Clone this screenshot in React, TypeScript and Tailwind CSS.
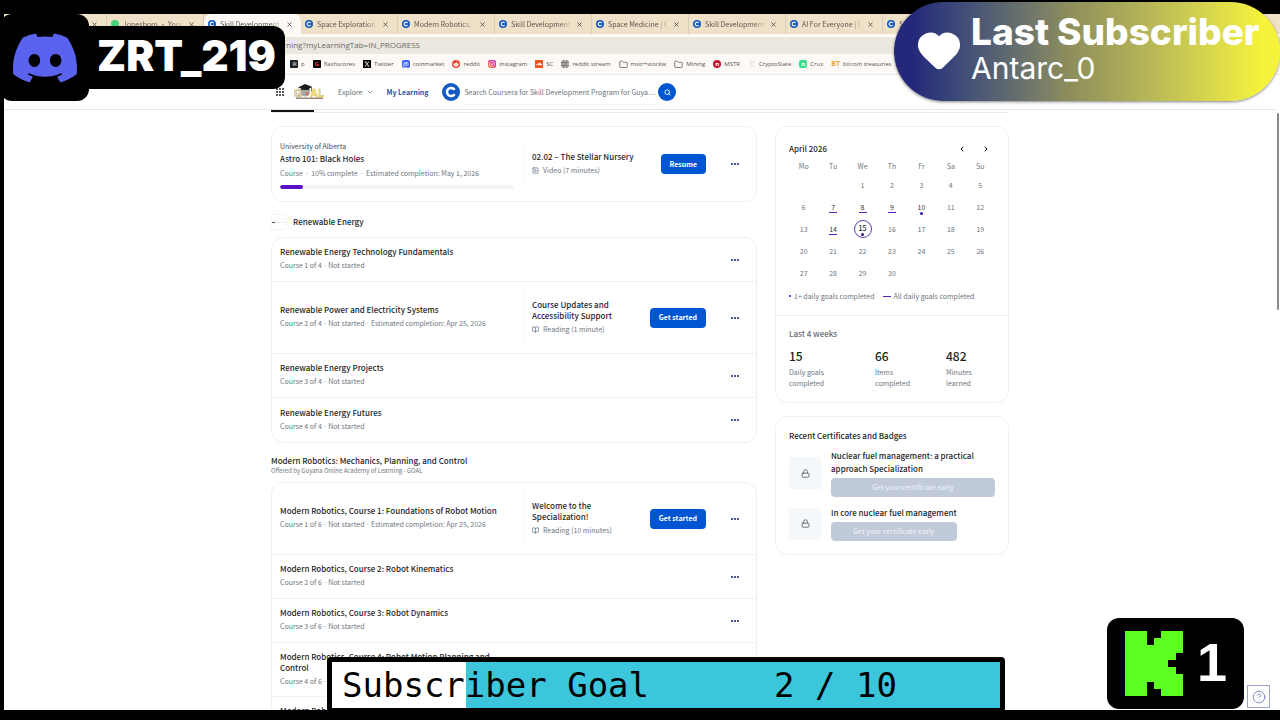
import type { ReactNode } from 'react';
import { BookOpen, ChevronDown, ChevronLeft, ChevronRight, CircleHelp, Folder, Globe, Heart, Lock, Search, SquarePlay, X } from 'lucide-react';
import { FaInstagram, FaRedditAlien, FaSoundcloud } from 'react-icons/fa';
import { FaXTwitter } from 'react-icons/fa6';
import { SiDiscord } from 'react-icons/si';

type NextItem = { title: string; kind: 'video' | 'reading'; meta: string; action: string };
type Course = { title: string; meta: string[]; next?: NextItem; tall?: boolean };

const tabs = [
  { title: '' },
  { title: 'Jonesboro • Young Th', green: true },
  { title: 'Skill Development Prog', active: true },
  { title: 'Space Exploration - Ho' },
  { title: 'Modern Robotics, Cour' },
  { title: 'Skill Development Prog' },
  { title: 'Space Medicine | Cours' },
  { title: 'Skill Development Prog' },
  { title: 'AI For Everyone | Cours' },
  { title: 'S' },
];

const renewable: Course[] = [
  { title: 'Renewable Energy Technology Fundamentals', meta: ['Course 1 of 4', 'Not started'] },
  {
    title: 'Renewable Power and Electricity Systems',
    meta: ['Course 2 of 4', 'Not started', 'Estimated completion: Apr 25, 2026'],
    next: { title: 'Course Updates and Accessibility Support', kind: 'reading', meta: 'Reading (1 minute)', action: 'Get started' },
  },
  { title: 'Renewable Energy Projects', meta: ['Course 3 of 4', 'Not started'] },
  { title: 'Renewable Energy Futures', meta: ['Course 4 of 4', 'Not started'] },
];

const robotics: Course[] = [
  {
    title: 'Modern Robotics, Course 1: Foundations of Robot Motion',
    meta: ['Course 1 of 6', 'Not started', 'Estimated completion: Apr 25, 2026'],
    next: { title: 'Welcome to the Specialization!', kind: 'reading', meta: 'Reading (10 minutes)', action: 'Get started' },
  },
  { title: 'Modern Robotics, Course 2: Robot Kinematics', meta: ['Course 2 of 6', 'Not started'] },
  { title: 'Modern Robotics, Course 3: Robot Dynamics', meta: ['Course 3 of 6', 'Not started'] },
  { title: 'Modern Robotics, Course 4: Robot Motion Planning and Control', meta: ['Course 4 of 6', 'Not started'], tall: true },
  { title: 'Modern Robotics, Course 5: Robot Manipulation and Wheeled Mobile Robots', meta: ['Course 5 of 6', 'Not started'], tall: true },
];

// April 2026 starts on a Wednesday; 0 is a blank cell.
const weeks = [
  [0, 0, 1, 2, 3, 4, 5],
  [6, 7, 8, 9, 10, 11, 12],
  [13, 14, 15, 16, 17, 18, 19],
  [20, 21, 22, 23, 24, 25, 26],
  [27, 28, 29, 30, 0, 0, 0],
];
const allGoals = [7, 8, 9, 14];
const someGoals = [10, 15];
const today = 15;

function CourseraMark({ className }: { className: string }) {
  return (
    <svg viewBox="0 0 18 18" className={className} aria-hidden="true">
      <circle cx="9" cy="9" r="9" fill="#1459c4" />
      <path d="M12.6 6.9A4.1 4.1 0 1 0 12.6 11.1" fill="none" stroke="#fff" strokeWidth="2.5" />
    </svg>
  );
}

function GoalLogo() {
  return (
    <svg viewBox="0 0 30 16" className="h-4 w-[30px]" role="img" aria-label="GOAL">
      <g fontFamily="Liberation Sans" fontSize="11" fontWeight="bold">
        <text x="0" y="12.5" fill="#fff" stroke="#b9a35c" strokeWidth="0.7">G</text>
        <text x="16" y="12.5" fill="#f3e36a" stroke="#c9b648" strokeWidth="0.3">AL</text>
      </g>
      <circle cx="11.500" cy="8" r="4.500" fill="#a9a9a9" />
      <circle cx="13" cy="9.500" r="1.500" fill="#d96a5c" />
      <path d="M4 3.500 11 0l7.500 3-7 3.200z" fill="#1d1d1d" />
      <path d="M7.500 4.500v1.500q4-2 7.500 0v-1.500M17.500 3.500v4" fill="#1d1d1d" stroke="#1d1d1d" strokeWidth="0.6" />
      <path d="M2 14.200h27" stroke="#6a4b3d" strokeWidth="1" />
    </svg>
  );
}

function TabStrip() {
  return (
    <div className="flex h-5 shrink-0 overflow-hidden bg-[#eee1c8] pl-[6px] text-[7px] leading-4">
      {tabs.map((tab, i) => (
        <div
          key={i}
          className={
            tab.active
              ? 'flex w-[97px] shrink-0 items-center gap-1 rounded-t-lg bg-[#fdfaf5] px-1'
              : 'flex w-[97px] shrink-0 items-center gap-1 border-r border-[#d9cdb6] px-1'
          }
        >
          {tab.green ? (
            <span className="size-2 shrink-0 rounded-full bg-[#43d47a]" />
          ) : (
            <CourseraMark className="size-2 shrink-0" />
          )}
          <span className="min-w-0 flex-1 overflow-hidden whitespace-nowrap text-[#5c564c] [mask-image:linear-gradient(to_right,#000_80%,transparent)]">
            {tab.title}
          </span>
          <button type="button" aria-label="Close tab" className="mr-1 text-[#3d3a34]">
            <X className="size-[7px]" strokeWidth={2.5} />
          </button>
        </div>
      ))}
    </div>
  );
}

function Bookmark({ icon, label }: { icon: ReactNode; label: string }) {
  return (
    <a href="#" className="flex shrink-0 items-center gap-[3px] whitespace-nowrap">
      {icon}
      {label}
    </a>
  );
}

function BookmarksBar() {
  return (
    <nav className="flex h-[21px] shrink-0 items-center gap-2 overflow-hidden border-b border-[#eee9e4] bg-[#fdf9f6] pl-[286px] font-['Open_Sans',sans-serif] text-[6px] text-[#555]">
      <Bookmark icon={<span className="flex size-2 items-center justify-center rounded-[1px] bg-[#1c1c1c] text-[6px] text-white">※</span>} label="p" />
      <Bookmark icon={<span className="flex size-2 items-center justify-center rounded-[1px] bg-black text-[6px] font-bold text-[#f03e4d]">G</span>} label="flashscores" />
      <Bookmark icon={<FaXTwitter className="size-2 bg-black p-px text-white" />} label="Twitter" />
      <Bookmark icon={<span className="flex size-2 items-center justify-center rounded-[2px] bg-[#3861fb] text-[7px] leading-none text-white">@</span>} label="coinmarket" />
      <Bookmark icon={<FaRedditAlien className="size-2 rounded-full bg-[#e8432d] p-px text-white" />} label="reddit" />
      <Bookmark icon={<FaInstagram className="size-2 rounded-[2px] bg-linear-to-tr from-[#f9a23b] via-[#e33a78] to-[#b437c9] p-px text-white" />} label="instagram" />
      <Bookmark icon={<FaSoundcloud className="size-2 bg-[#f2501d] p-px text-white" />} label="SC" />
      <Bookmark icon={<Globe className="size-2 rounded-full bg-[#333] text-white" />} label="reddit stream" />
      <Bookmark icon={<Folder className="size-[9px]" />} label="mstr+stockw" />
      <Bookmark icon={<Folder className="size-[9px]" />} label="Mining" />
      <Bookmark icon={<span className="flex size-2 items-center justify-center rounded-full bg-[#c4122f] text-[6px] font-bold text-white">n</span>} label="MSTR" />
      <Bookmark icon={<span className="w-2 text-center text-[7px] text-[#999]">⁝:</span>} label="CryptoSlate" />
      <Bookmark icon={<span className="flex size-2 items-center justify-center rounded-[2px] bg-[#3ddc84] text-[6px] font-bold text-white">n</span>} label="Crux" />
      <Bookmark icon={<span className="text-[7px] font-bold text-[#e9a63a]">BT</span>} label="bitcoin treasuries" />
      <Bookmark icon={<span className="-ml-1 text-[7px] text-[#4a7fc0]">(₿)</span>} label="" />
    </nav>
  );
}

function SiteHeader() {
  return (
    <header className="h-[35px] border-b border-[#e3e7ea]">
      <div className="mx-auto flex h-[34px] max-w-[738px] items-center pl-[5px] text-[7px]">
        <button type="button" aria-label="Apps" className="grid grid-cols-3 gap-px">
          {Array.from({ length: 9 }, (_, i) => (
            <span key={i} className="size-[2px] rounded-full bg-[#222]" />
          ))}
        </button>
        <a href="#" className="ml-[10px]">
          <GoalLogo />
        </a>
        <button type="button" className="ml-[14px] flex items-center gap-1 text-[#636b74]">
          Explore
          <ChevronDown className="size-2" />
        </button>
        <a href="#" className="ml-3 font-bold text-[#2a55a5]">
          My Learning
        </a>
        <CourseraMark className="ml-[14px] size-[18px] shrink-0" />
        <input
          type="text"
          aria-label="Search"
          placeholder="Search Coursera for Skill Development Program for Guya…"
          className="ml-1 h-[26px] w-[194px] border-b border-[#f1f3f5] text-[7px] outline-none placeholder:text-[#6b7178] placeholder:opacity-100"
        />
        <button type="button" aria-label="Submit search" className="flex size-[18px] items-center justify-center rounded-full bg-[#0056d2] text-white">
          <Search className="size-[7px]" strokeWidth={3} />
        </button>
      </div>
    </header>
  );
}

function Meta({ parts, wide }: { parts: string[]; wide?: boolean }) {
  return (
    <p className="flex text-[7px] leading-[14px] whitespace-nowrap text-[#6d7680]">
      {parts.map((part, i) => (
        <span key={part}>
          {i > 0 && (
            <span className={wide ? "px-[3px] font-['Liberation_Sans',sans-serif]" : "px-[2px] font-['Liberation_Sans',sans-serif]"}>·</span>
          )}
          {part}
        </span>
      ))}
    </p>
  );
}

function NextUp({ item }: { item: NextItem }) {
  const Icon = item.kind === 'video' ? SquarePlay : BookOpen;
  return (
    <div className="flex w-[183px] items-center justify-between">
      <div className="w-[113px] border-l border-[#f4f5f7] py-2 pl-2">
        <p className="text-[8px] leading-[11px] font-medium text-[#1f1f1f]">{item.title}</p>
        <p className="mt-px flex items-center gap-1 text-[7px] leading-[14px] text-[#6d7680]">
          <Icon className="size-[7px] text-[#46566e]" />
          {item.meta}
        </p>
      </div>
      <button type="button" className="h-5 rounded-[4px] bg-[#0056d2] px-[9px] text-[7px] font-bold whitespace-nowrap text-white">
        {item.action}
      </button>
    </div>
  );
}

function MoreButton() {
  return (
    <button type="button" aria-label="More options" className="ml-2 flex w-[42px] justify-center gap-px">
      <span className="size-[2px] bg-[#4a5a90]" />
      <span className="size-[2px] bg-[#4a5a90]" />
      <span className="size-[2px] bg-[#4a5a90]" />
    </button>
  );
}

function CourseList({ courses }: { courses: Course[] }) {
  return (
    <ul className="divide-y divide-[#eef0f2] rounded-xl border border-[#eef0f2]">
      {courses.map((c) => (
        <li
          key={c.title}
          className={
            c.next
              ? 'flex h-[72px] items-center pl-2'
              : c.tall
                ? 'flex h-[54px] items-center pl-2'
                : 'flex h-11 items-center pl-2'
          }
        >
          <div className="min-w-0 flex-1">
            <h3
              className={
                c.tall
                  ? 'mb-px w-[214px] text-[8px] leading-[11px] font-medium text-[#1f1f1f]'
                  : 'mb-px text-[8px] leading-[11px] font-medium text-[#1f1f1f]'
              }
            >
              {c.title}
            </h3>
            <Meta parts={c.meta} />
          </div>
          {c.next && <NextUp item={c.next} />}
          <MoreButton />
        </li>
      ))}
    </ul>
  );
}

function CurrentCourse() {
  return (
    <section className="flex h-[76px] items-center rounded-xl border border-[#eef0f2] pl-2">
      <div className="min-w-0 flex-1 pr-[9px]">
        <p className="text-[7px] leading-3 text-[#454b52]">University of Alberta</p>
        <h2 className="text-[8px] leading-[14px] font-medium text-[#1f1f1f]">Astro 101: Black Holes</h2>
        <Meta wide parts={['Course', '10% complete', 'Estimated completion: May 1, 2026']} />
        <div className="mt-1 h-1 overflow-hidden rounded-full bg-[#f2f4f6]">
          <div className="h-full w-1/10 rounded-full bg-[#5a10c4]" />
        </div>
      </div>
      <NextUp item={{ title: '02.02 – The Stellar Nursery', kind: 'video', meta: 'Video (7 minutes)', action: 'Resume' }} />
      <MoreButton />
    </section>
  );
}

function Day({ day }: { day: number }) {
  if (!day) return null;
  const marked = allGoals.includes(day) || someGoals.includes(day);
  return (
    <span
      className={
        day === today
          ? 'relative mx-auto flex size-[18px] items-center justify-center rounded-full border border-[#5b3cb0] pb-[2px] font-medium text-[#1f1f1f]'
          : marked
            ? 'relative mx-auto flex size-[18px] items-center justify-center text-[#333]'
            : 'mx-auto flex size-[18px] items-center justify-center'
      }
    >
      {day}
      {allGoals.includes(day) && <span className="absolute bottom-[3px] h-px w-2 bg-[#5b1fc0]" />}
      {someGoals.includes(day) && <span className="absolute bottom-px size-[3px] rounded-full bg-[#3c1299]" />}
    </span>
  );
}

function GoalsCard() {
  return (
    <section className="rounded-xl border border-[#eef0f2]">
      <div className="px-[13px] pt-[14px]">
        <div className="flex h-4 items-center">
          <h2 className="flex-1 text-[8px] font-medium text-[#1f1f1f]">April 2026</h2>
          <button type="button" aria-label="Previous month" className="mr-4">
            <ChevronLeft className="size-2" strokeWidth={3} />
          </button>
          <button type="button" aria-label="Next month" className="mr-[5px]">
            <ChevronRight className="size-2" strokeWidth={3} />
          </button>
        </div>
        <table className="mt-px w-full table-fixed text-center text-[7px] text-[#6d7680]">
          <thead>
            <tr className="h-4">
              {['Mo', 'Tu', 'We', 'Th', 'Fr', 'Sa', 'Su'].map((d) => (
                <th key={d} scope="col" className="p-0 leading-4 font-normal">
                  {d}
                </th>
              ))}
            </tr>
          </thead>
          <tbody>
            {weeks.map((week, w) => (
              <tr key={w} className="h-[22px]">
                {week.map((day, i) => (
                  <td key={i} className="p-0 align-middle leading-4">
                    <Day day={day} />
                  </td>
                ))}
              </tr>
            ))}
          </tbody>
        </table>
        <div className="flex h-[31px] items-center gap-2 pb-[7px] text-[7px] text-[#6d7680]">
          <span className="flex items-center gap-[3px]">
            <span className="size-[2px] rounded-full bg-[#3c1299]" />
            1+ daily goals completed
          </span>
          <span className="flex items-center gap-[3px]">
            <span className="h-px w-2 bg-[#5b1fc0]" />
            All daily goals completed
          </span>
        </div>
      </div>
      <div className="border-t border-[#eef0f2] px-[13px] pt-3 pb-[13px]">
        <h3 className="text-[8px] leading-3 font-medium text-[#636b74]">Last 4 weeks</h3>
        <dl className="mt-2 grid grid-cols-[86px_71px_1fr] text-[7px] leading-[11px] text-[#6d7680]">
          {[
            ['15', 'Daily goals completed'],
            ['66', 'Items completed'],
            ['482', 'Minutes learned'],
          ].map(([value, label]) => (
            <div key={label} className="flex flex-col-reverse">
              <dt className="w-10">{label}</dt>
              <dd className="mb-[3px] text-[12px] leading-4 font-medium text-[#1f1f1f]">{value}</dd>
            </div>
          ))}
        </dl>
      </div>
    </section>
  );
}

function Certificate({ title }: { title: string }) {
  return (
    <li className="flex items-center gap-[10px]">
      <span className="flex size-8 shrink-0 items-center justify-center bg-[#f5f8fb] text-[#4b525b]">
        <Lock className="size-[9px]" />
      </span>
      <div>
        <h3 className="text-[8px] leading-[13px] font-medium text-[#1f1f1f]">{title}</h3>
        <button type="button" disabled className="mt-[3px] block h-[19px] w-full rounded-[4px] bg-[#c1cad9] text-[7px] font-medium text-[#e9eef5]">
          Get your certificate early
        </button>
      </div>
    </li>
  );
}

function DiscordBadge() {
  return (
    <div className="absolute top-[14px] left-0 flex items-center">
      <div className="flex h-[87px] w-[89px] items-center justify-center rounded-xl bg-black">
        <SiDiscord className="size-16 text-[#5a62ee]" />
      </div>
      <div className="-ml-3 flex h-[63px] w-[208px] items-center rounded-xl bg-black pb-1 pl-5 font-['Inter',sans-serif] text-[42px] leading-none font-black text-white">
        ZRT_219
      </div>
    </div>
  );
}

function LastSubscriber() {
  return (
    <div className="absolute top-[2px] right-0 flex h-[99px] w-[386px] items-center rounded-full bg-linear-to-r from-[#25287a] from-5% via-[#8d8d5c] via-45% to-[#f4f23a] to-95% pb-1 pl-[22px] font-['Inter',sans-serif] whitespace-nowrap text-white shadow-[0_1px_3px_rgba(0,0,0,0.5)]">
      <Heart className="size-[46px]" fill="currentColor" />
      <div className="ml-[9px]">
        <p className="text-[37px] leading-9 font-extrabold">Last Subscriber</p>
        <p className="text-[30px] leading-9">Antarc_0</p>
      </div>
    </div>
  );
}

function SubscriberGoal() {
  const current = 2;
  const target = 10;
  return (
    <div className="absolute bottom-[7px] left-[327px] w-[678px] rounded-[4px] border-[5px] border-black bg-[#3bc6dc]">
      <div className="relative flex h-[46px] items-center pl-[10px] font-['DejaVu_Sans_Mono',monospace] text-[34px] whitespace-pre text-black">
        <span className="absolute inset-y-0 left-0 bg-white" style={{ width: `${(current / target) * 100}%` }} />
        <span className="relative w-[432px]">Subscriber Goal</span>
        <span className="relative">
          {current} / {target}
        </span>
      </div>
    </div>
  );
}

function KickBadge() {
  return (
    <div className="absolute right-9 bottom-[11px] flex h-[91px] w-[137px] items-center rounded-xl bg-black pl-[18px]">
      <svg viewBox="0 0 58 65" className="h-[65px] w-[58px]" aria-label="Kick">
        <path d="M0 0h22v14h7V7h7V0h22v22h-7v7h-8v7h8v7h7v22H36v-7h-7v-7h-7v14H0z" fill="#5cff1f" />
      </svg>
      <span className="ml-[14px] pb-1 font-['Liberation_Sans',sans-serif] text-[54px] leading-none font-bold text-white">1</span>
    </div>
  );
}

export default function App() {
  return (
    <div className="relative h-screen overflow-hidden bg-black pt-[14px] pb-[10px] pl-1 font-['Noto_Sans_CJK_SC',sans-serif]">
      <div className="flex h-full flex-col overflow-hidden bg-white">
        <TabStrip />
        <div className="shrink-0 bg-[#fdfaf5] pt-[3px]">
          <div className="flex h-[17px] items-center bg-[#ece8e0] pb-px pl-[279px] font-['Open_Sans',sans-serif] text-[8px] text-[#6b6860]">
            rning?myLearningTab=IN_PROGRESS
          </div>
        </div>
        <BookmarksBar />
        <div className="min-h-0 flex-1 overflow-hidden pr-1">
          <SiteHeader />
          <main className="mx-auto max-w-[738px]">
            <div className="h-[3px] border-b border-[#e9ecef]">
              <div className="h-[2px] w-[43px] bg-[#111]" />
            </div>
            <div className="mt-[13px] grid grid-cols-[1fr_234px] items-start gap-[18px]">
              <div className="min-w-0">
                <CurrentCourse />
                <div className="flex h-[35px] items-center gap-[6px] pt-[5px]">
                  <span className="flex size-4 items-center rounded-[2px] border border-[#f3f4f6]">
                    <span className="h-px w-[3px] bg-[#555]" />
                    <span className="h-px flex-1 bg-[#eee]" />
                  </span>
                  <h2 className="text-[8px] leading-4 font-medium text-[#1f1f1f]">Renewable Energy</h2>
                </div>
                <CourseList courses={renewable} />
                <div className="h-[39px] pt-3">
                  <h2 className="text-[8px] leading-3 font-medium text-[#1f1f1f]">Modern Robotics: Mechanics, Planning, and Control</h2>
                  <p className="text-[6px] leading-2 text-[#6d7680]">Offered by Guyana Online Academy of Learning - GOAL</p>
                </div>
                <CourseList courses={robotics} />
              </div>
              <aside className="flex flex-col gap-[13px]">
                <GoalsCard />
                <section className="rounded-xl border border-[#eef0f2] px-[13px] pt-3 pb-[13px]">
                  <h2 className="text-[8px] leading-[13px] font-medium text-[#1f1f1f]">Recent Certificates and Badges</h2>
                  <ul className="mt-[7px] flex flex-col gap-[9px]">
                    <Certificate title="Nuclear fuel management: a practical approach Specialization" />
                    <Certificate title="In core nuclear fuel management" />
                  </ul>
                </section>
              </aside>
            </div>
          </main>
        </div>
      </div>

      <span className="absolute top-[113px] right-px h-[197px] w-[2px] rounded-full bg-[#8b8b8b]" />
      <button type="button" aria-label="Help" className="absolute right-[10px] bottom-3 flex size-[23px] items-center justify-center border border-[#9aa3cc] bg-white text-[#7380b0]">
        <CircleHelp className="size-[14px]" strokeWidth={1.5} />
      </button>
      <DiscordBadge />
      <LastSubscriber />
      <SubscriberGoal />
      <KickBadge />
    </div>
  );
}
